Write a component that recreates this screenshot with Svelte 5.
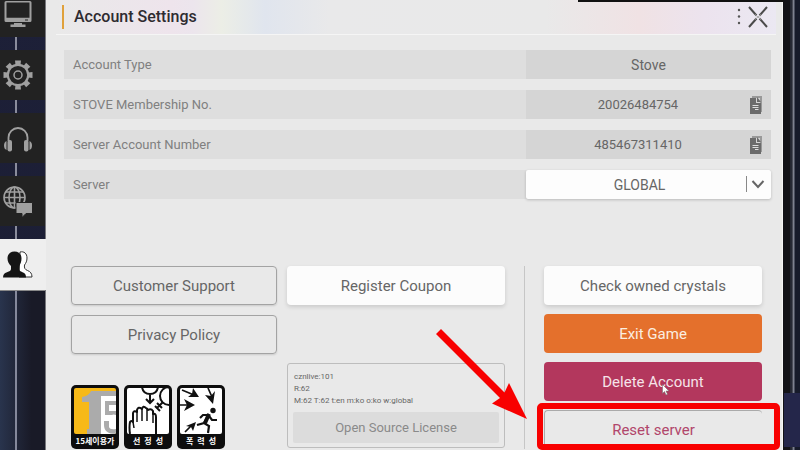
<script lang="ts">
	const tabs = [
		{ id: 'display', label: 'Display' },
		{ id: 'system', label: 'System' },
		{ id: 'sound', label: 'Sound' },
		{ id: 'language', label: 'Language' },
		{ id: 'account', label: 'Account' }
	];

	const rows = [
		{ label: 'Account Type', value: 'Stove', copy: false },
		{ label: 'STOVE Membership No.', value: '20026484754', copy: true },
		{ label: 'Server Account Number', value: '485467311410', copy: true }
	];

	let active = $state('account');
	let server = $state('GLOBAL');

	function copy(value: string) {
		navigator.clipboard?.writeText(value);
	}
</script>

<div class="screen">
	<nav class="sidebar" aria-label="Settings">
		{#each tabs as tab (tab.id)}
			<button
				class="tab"
				class:active={active === tab.id}
				aria-label={tab.label}
				onclick={() => (active = tab.id)}
			>
				<svg class="tab-icon" viewBox="0 0 32 32" aria-hidden="true">
					{#if tab.id === 'display'}
						<path
							fill="currentColor"
							fill-rule="evenodd"
							d="M4 1h24a1.500 1.500 0 0 1 1.500 1.500v18a1.500 1.500 0 0 1-1.500 1.500H4a1.500 1.500 0 0 1-1.500-1.500v-18A1.500 1.500 0 0 1 4 1zm.5 1.500v15.300h23V2.500zM12 23h8v1.500h3.500V27H8.500v-2.500H12z"
						/>
						<path stroke="#222" d="M23 20h3" />
					{:else if tab.id === 'system'}
						<g fill="currentColor">
							{#each [0, 45, 90, 135, 180, 225, 270, 315] as angle}
								<path d="M13.500 6l-.5-4.500h6L18.500 6z" transform="rotate({angle} 16 16)" />
							{/each}
						</g>
						<circle cx="16" cy="16" r="10.200" fill="none" stroke="currentColor" stroke-width="2.200" />
						<circle cx="16" cy="16" r="4" fill="none" stroke="currentColor" stroke-width="1.500" />
					{:else if tab.id === 'sound'}
						<path
							d="M6.500 19v-3.500a9.500 9.500 0 0 1 19 0V19"
							fill="none"
							stroke="currentColor"
							stroke-width="1.800"
						/>
						<g fill="currentColor">
							<rect x="5.500" y="18" width="4.500" height="11.500" rx="2" />
							<rect x="22" y="18" width="4.500" height="11.500" rx="2" />
							<path d="M4.500 19v9Q2 27 2 23.500T4.500 19zM27.500 19v9q2.500-1 2.500-4.500T27.500 19z" />
						</g>
					{:else if tab.id === 'language'}
						<g fill="none" stroke="currentColor" stroke-width="1.600">
							<circle cx="12.500" cy="12.500" r="10.500" />
							<ellipse cx="12.500" cy="12.500" rx="5.500" ry="10.500" />
							<path d="M12.500 2v21M2 12.500h21M4 7h17M4 18h17" />
						</g>
						<path
							fill="currentColor"
							stroke="#222"
							d="M14 17.500h16.500v11H24L20 32.500v-4h-6z"
						/>
					{:else}
						<path
							fill="#fff"
							stroke="currentColor"
							d="M18 3c4-1 7 1.500 7 6 0 3-1 5-2.500 7-.5 3 .5 4.500 3 5.500 3 1.200 4.500 3 4.500 6.500H17z"
						/>
						<path
							fill="#151515"
							d="M12.500 2.500c4.500 0 7 2.800 7 7 0 3-1 5.500-2.500 7.500v3c0 1.500 1.500 2.500 3.500 3.200 2.500.8 3.500 2.300 3.500 5.300H1c.2-3 1.200-4.500 4-5.300 2.500-.7 4-1.700 4-3.200v-3C7 15 5.500 12.500 5.500 9.500c0-4.200 2.500-7 7-7z"
						/>
					{/if}
				</svg>
			</button>
		{/each}
		<div class="sidebar-rest"></div>
	</nav>

	<main class="panel">
		<header class="title-bar">
			<h1>Account Settings</h1>
			<button class="close" aria-label="Close">
				<svg viewBox="0 0 32 24" width="32" height="24" aria-hidden="true">
					<g fill="#555">
						<circle cx="3" cy="5" r="1.200" />
						<circle cx="3" cy="11.500" r="1.200" />
						<circle cx="3" cy="18" r="1.200" />
					</g>
					<path
						d="M13 2l7.500 8.500M31 2l-7.500 8.500M13 22l7.500-8.500M31 22l-7.500-8.500"
						fill="none"
						stroke="#4a4a4a"
						stroke-width="2"
					/>
					<path d="M19 9.500l6 5M25 9.500l-6 5" stroke="#aaa" />
				</svg>
			</button>
		</header>

		<section class="details">
			{#each rows as row (row.label)}
				<div class="row">
					<span class="row-label">{row.label}</span>
					<div class="row-value" class:number={row.copy}>
						<span class="row-text">{row.value}</span>
						{#if row.copy}
							<button class="copy" aria-label="Copy {row.label}" onclick={() => copy(row.value)}>
								<svg viewBox="0 0 12 18" width="12" height="18" aria-hidden="true">
									<path fill="#999" d="M2 0h10v16h-2V2H2z" />
									<path fill="#6b6b6b" d="M0 2h6v5h5v11H0z" />
									<path fill="#6b6b6b" d="M7 1l4 5H7z" />
									<path stroke="#ddd" d="M2.500 9.500h6M2.500 11.500h6M5 13.500h3.500" />
								</svg>
							</button>
						{/if}
					</div>
				</div>
			{/each}
			<div class="row">
				<label class="row-label" for="server">Server</label>
				<div class="select-box">
					<select id="server" bind:value={server}>
						<option>GLOBAL</option>
						<option>ASIA</option>
					</select>
					<svg class="chevron" viewBox="0 0 20 16" width="20" height="16" aria-hidden="true">
						<path d="M1.500 0v16" stroke="#888" />
						<path d="M7.500 5l5.500 6 5.500-6" fill="none" stroke="#666" stroke-width="2" />
					</svg>
				</div>
			</div>
		</section>

		<section class="actions">
			<div class="column links">
				<button class="button outline">Customer Support</button>
				<button class="button outline">Privacy Policy</button>
				<div class="ratings">
					<figure class="rating">
						<svg viewBox="0 0 42 46" aria-hidden="true">
							<path fill="#f7b917" d="M0 0h42v46H0z" />
							<path fill="#fff" d="M22 3h20v43H22z" />
							<path
								fill="#ababab"
								d="M8 14V9q7-1 9-6h25v5H27v38H13v-5h2V14z"
							/>
							<path
								fill="#ababab"
								d="M31 13h11v4h-7v6h7v4q-3-1-4 0h-7zM30 33h5v6q1 3 7 2v5q-12 0-12-9z"
							/>
						</svg>
						<figcaption>15세이용가</figcaption>
					</figure>
					<figure class="rating">
						<svg viewBox="0 0 42 46" aria-hidden="true">
							<path fill="#fff" d="M0 0h42v46H0z" />
							<g fill="none" stroke="#111" stroke-width="2">
								<path d="M15-1q1 7 8 7t8-7M23 6v9M19 11l4 4 4-4" />
								<circle cx="42" cy="8" r="9" />
								<path d="M36 14l-6 6M30 15l5 5M28 18l5 5" />
								<path
									fill="#fff"
									stroke-linejoin="round"
									d="M3 46q-1-7 0-12 1-2 3 0v-9q1-3 4-1v-2q1-4 5-1 1-4 4-1 1 0 2 2 3-2 5 1v3q3-1 3 3v17"
								/>
								<path stroke-width="1.500" d="M6 34l1 6M10 22v12M15 20v13M20 20v13M26 23v12" />
							</g>
						</svg>
						<figcaption>선&ensp;정&ensp;성</figcaption>
					</figure>
					<figure class="rating">
						<svg viewBox="0 0 42 46" aria-hidden="true">
							<path fill="#fff" d="M0 0h42v46H0z" />
							<path d="M2 2l12 5M0 17h8M28 0l4 9M5 44l7-7" stroke="#111" stroke-width="1.700" />
							<path
								fill="#111"
								d="M19 9L8 9l4-3 1-6zM15 17L4 23l3-6-3-6zM33 16l-8-9 6 1 4-5zM16 34l-3 9-2-4-5-1z"
							/>
							<circle cx="33" cy="22.500" r="2.700" fill="#111" />
							<path
								d="M29 26l-5 9-7 2M24 35l5 3-1 7M29 27h-6l-3 3M29 28l3 4h5"
								fill="none"
								stroke="#111"
								stroke-width="2.200"
							/>
							<path d="M29 26l-4 9" stroke="#111" stroke-width="4" />
						</svg>
						<figcaption>폭&ensp;력&ensp;성</figcaption>
					</figure>
				</div>
			</div>

			<div class="column build">
				<button class="button light">Register Coupon</button>
				<div class="version">
					<p>cznlive:101</p>
					<p>R:62</p>
					<p>M:62 T:62 t:en m:ko o:ko w:global</p>
					<button class="license">Open Source License</button>
				</div>
			</div>

			<div class="column account">
				<button class="button light">Check owned crystals</button>
				<button class="button exit">Exit Game</button>
				<div class="pointed">
					<button class="button delete">Delete Account</button>
					<svg class="cursor" viewBox="0 0 8 12" aria-hidden="true">
						<path d="M.5.500v9l2-2 1.500 3.500 1.500-.7L4 7h3z" fill="#fff" stroke="#666" stroke-width=".5" />
					</svg>
				</div>
				<div class="highlighted">
					<button class="button reset">Reset server</button>
					<svg class="arrow" viewBox="0 0 92 92" aria-hidden="true">
						<path
							fill="#f80000"
							d="M5 0L68.500 63.500 73 54 91 90 56 74.500 64 69 0 5z"
						/>
					</svg>
					<div class="frame"></div>
				</div>
			</div>
		</section>
	</main>

	<aside class="backdrop">
		<div class="backdrop-block"></div>
	</aside>
	<div class="top-edge"></div>
</div>

<style>
	:global(body) {
		margin: 0;
		background: #e9e9e9;
	}

	.screen {
		position: relative;
		display: grid;
		grid-template-columns: 46px minmax(0, 1fr) 17px;
		min-height: 100vh;
		overflow: hidden;
		background: #e9e9e9;
		color: #666;
		font-family: Roboto, 'Noto Sans CJK KR', sans-serif;
		font-size: 15px;
	}

	button,
	select {
		margin: 0;
		padding: 0;
		border: 0;
		background: none;
		color: inherit;
		font: inherit;
		cursor: pointer;
	}

	/* left tabs */
	.sidebar {
		display: flex;
		flex-direction: column;
		gap: 13px;
		box-sizing: border-box;
		border-right: 1px solid #77777c;
		background: linear-gradient(90deg, transparent 15px, #8a8c9c 15px, #8a8c9c 17px, transparent 17px),
			linear-gradient(#1d2038, #1b1d33);
	}

	.tab {
		display: flex;
		align-items: center;
		width: 100%;
		height: 50px;
		background: #222;
		color: #a0a0a0;
	}

	.tab:first-child {
		height: 37px;
		align-items: start;
	}

	.tab.active {
		width: 46px;
		height: 51px;
		background: #eee;
		color: #333;
	}

	.tab-icon {
		width: 32px;
		height: 32px;
		margin-left: 2px;
		flex: none;
	}

	.sidebar-rest {
		flex: 1;
		margin-top: -13px;
		border-top: 1px solid #888;
		background: linear-gradient(90deg, transparent 15px, #85899c 15px, #85899c 17px, transparent 17px),
			linear-gradient(90deg, #29344d, #191a27 70%);
	}

	/* panel */
	.panel {
		padding: 0 11px 0 18px;
		border-right: 1px solid #f5f5f5;
	}

	.title-bar {
		display: flex;
		align-items: center;
		justify-content: space-between;
		height: 34px;
		margin: 0 -5px 0 -8px;
		padding: 0 8px;
		border-bottom: 1px solid #f5f5f5;
		background: linear-gradient(
			90deg,
			#e9e9e9,
			#eee4ec 16%,
			#ece5ed 19%,
			#eceee6 23%,
			#e0e5ee 29%,
			#e9e9ea 38%,
			#e9e9e9 68%,
			#f0e2e4 81%,
			#ece3ee 90%,
			#ebe8f2
		);
	}

	h1 {
		margin: 0 0 0 -2px;
		padding-left: 10px;
		border-left: 2px solid #e0a13b;
		color: #2e2b30;
		font-size: 16px;
		font-weight: 500;
		line-height: 24px;
	}

	.close {
		height: 24px;
	}

	.close svg {
		display: block;
	}

	.details {
		display: grid;
		gap: 11px;
		padding-top: 15px;
	}

	.row {
		display: grid;
		grid-template-columns: 462fr 245fr;
		height: 29px;
		background: #dedede;
	}

	.row-label {
		padding-left: 9px;
		color: #808080;
		font-size: 13px;
		line-height: 29px;
	}

	.row-value {
		display: flex;
		align-items: center;
		background: #d5d5d5;
	}

	.row-text {
		flex: 1;
		font-size: 14px;
		text-align: center;
	}

	.number .row-text {
		font-size: 13px;
	}

	.copy {
		width: 12px;
		height: 18px;
		margin-right: 9px;
	}

	.copy svg {
		display: block;
	}

	.select-box {
		position: relative;
		border-radius: 2px;
		background: #fdfdfd;
		box-shadow: 0 1px 3px #0003;
	}

	select {
		appearance: none;
		width: 100%;
		height: 29px;
		padding-right: 18px;
		font-size: 14px;
		text-align: center;
		text-align-last: center;
	}

	.chevron {
		position: absolute;
		top: 6px;
		right: 6px;
		pointer-events: none;
	}

	/* lower buttons */
	.actions {
		display: grid;
		grid-template-columns: 206fr 218fr 247fr;
		column-gap: 10px;
		padding: 67px 9px 0 7px;
	}

	.column {
		display: flex;
		flex-direction: column;
	}

	.button {
		box-sizing: border-box;
		width: 100%;
		height: 39px;
		border-radius: 4px;
	}

	.links {
		gap: 10px;
	}

	.outline {
		border: 1px solid #a3a3a3;
		box-shadow: 0 1px 2px #0002;
	}

	.light {
		background: #fcfcfc;
		box-shadow: 0 2px 4px #0002;
	}

	.ratings {
		display: flex;
		gap: 5px;
		margin-top: 21px;
	}

	.rating {
		display: flex;
		flex-direction: column;
		box-sizing: border-box;
		width: 48px;
		height: 64px;
		margin: 0;
		padding: 3px 3px 0;
		border-radius: 5px;
		background: #0d0d0d;
	}

	.rating svg {
		display: block;
		width: 42px;
		height: 46px;
		border-radius: 2px;
	}

	figcaption {
		color: #fff;
		font-family: 'Noto Sans CJK KR', sans-serif;
		font-size: 8px;
		font-weight: 700;
		line-height: 14px;
		text-align: center;
		white-space: nowrap;
	}

	.build {
		gap: 58px;
	}

	.version {
		box-sizing: border-box;
		height: 85px;
		padding: 7px 5px 0;
		border: 1px solid #bdbdbd;
		border-radius: 3px;
	}

	.version p {
		margin: 0 1px;
		font-size: 8px;
		line-height: 12px;
		white-space: nowrap;
	}

	.license {
		width: 100%;
		height: 31px;
		margin-top: 5px;
		border-radius: 2px;
		background: #dcdcdc;
		color: #8a8a8a;
		font-size: 13px;
	}

	.account {
		gap: 9px;
		margin-left: 9px;
		padding-left: 19px;
		border-left: 1px solid #c6c6c6;
	}

	.exit {
		background: #e4702c;
		color: #fbeee0;
	}

	.delete {
		background: #b3375d;
		color: #f6e3e9;
	}

	.reset {
		border: 1px solid #aaa;
		border-width: 1px 0 0 1px;
		color: #b1466b;
	}

	.pointed,
	.highlighted {
		position: relative;
		height: 39px;
	}

	.cursor {
		position: absolute;
		top: 22px;
		left: 54%;
		width: 8px;
		height: 12px;
	}

	.frame {
		position: absolute;
		inset: -7px -18px -1px -7px;
		border: 6px solid #f80000;
		border-radius: 5px;
		pointer-events: none;
	}

	.arrow {
		position: absolute;
		top: -81px;
		left: -108px;
		width: 92px;
		height: 92px;
		pointer-events: none;
	}

	/* scene behind the panel */
	.backdrop {
		display: flex;
		flex-direction: column;
		justify-content: flex-end;
		background: linear-gradient(
			90deg,
			#121217 7px,
			#363b4b 8px,
			#16171f 9px,
			#7d8190 10px,
			#7d8190 11px,
			#171b2b 12px
		);
	}

	.backdrop-block {
		height: 54px;
		margin: 0 0 3px 1px;
		background: #24264a;
	}

	.top-edge {
		position: absolute;
		top: 0;
		right: 16px;
		width: 206px;
		height: 2px;
		background: #111;
	}
</style>
